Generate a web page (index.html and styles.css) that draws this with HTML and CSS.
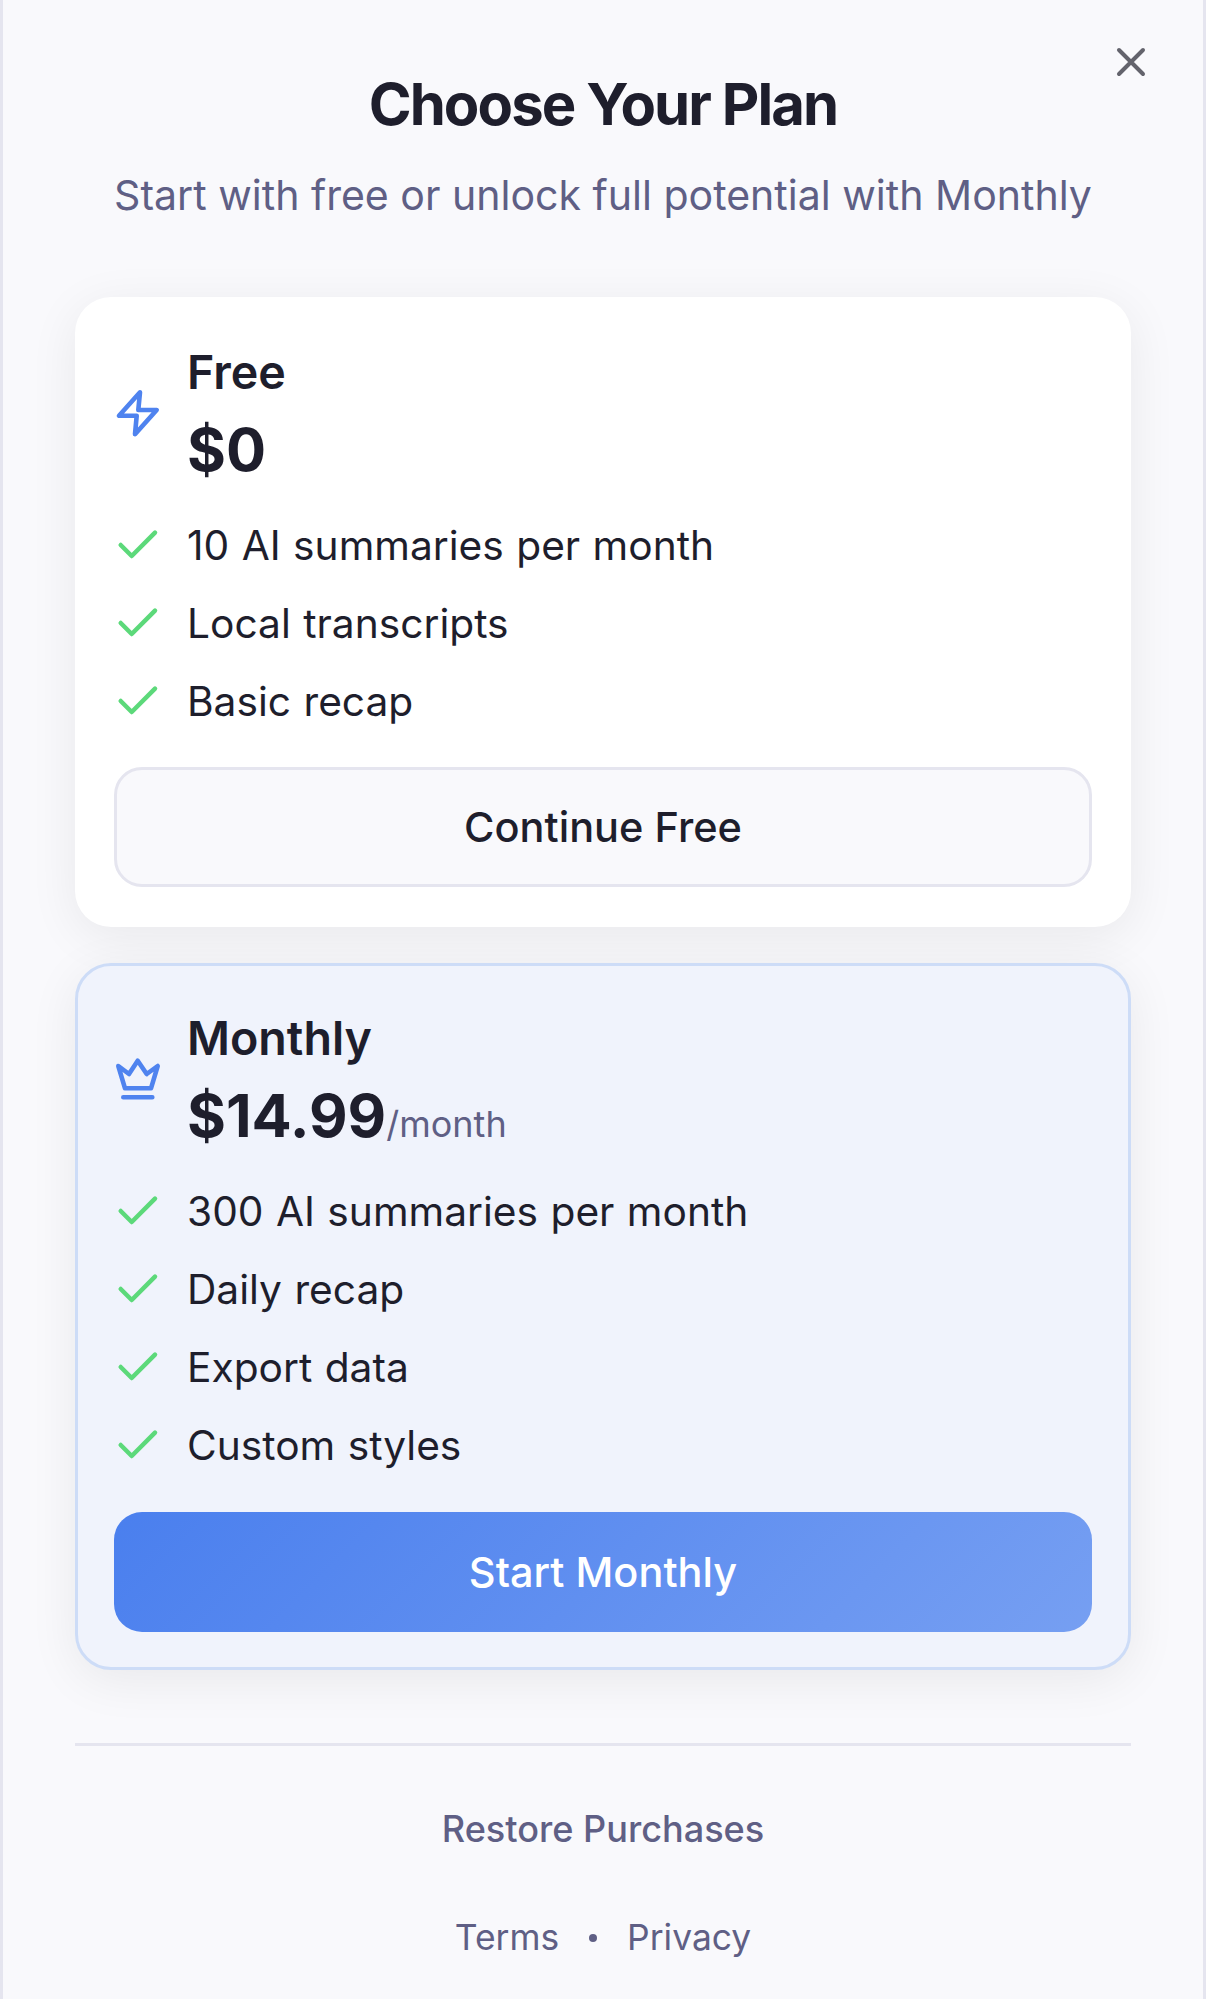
FILE: index.html
```html
<!DOCTYPE html>
<html lang="en">
<head>
<meta charset="utf-8">
<title>Choose Your Plan</title>
<link rel="stylesheet" href="styles.css">
</head>
<body>
<main class="sheet">
  <button class="close" aria-label="Close">
    <svg width="30" height="30" viewBox="0 0 30 30"><path d="M3 3 27 27M27 3 3 27"/></svg>
  </button>
  <header class="head">
    <h1 class="title">Choose Your Plan</h1>
    <p class="subtitle">Start with free or unlock full potential with Monthly</p>
  </header>
  <section class="plans">
    <article class="card">
      <div class="plan-head">
        <svg class="plan-icon" width="42" height="48" viewBox="-3 1 42 48"><path d="M23 3.3 2 26.7H19.7L18 45.3 39.7 21H21.3Z"/></svg>
        <div>
          <div class="plan-name">Free</div>
          <div class="plan-price">$0</div>
        </div>
      </div>
      <ul class="features">
        <li class="feature"><svg class="check" width="42" height="38" viewBox="-3 2 42 38"><path d="M3.7 20 14.7 31 38 7.7"/></svg>10 AI summaries per month</li>
        <li class="feature"><svg class="check" width="42" height="38" viewBox="-3 2 42 38"><path d="M3.7 20 14.7 31 38 7.7"/></svg>Local transcripts</li>
        <li class="feature"><svg class="check" width="42" height="38" viewBox="-3 2 42 38"><path d="M3.7 20 14.7 31 38 7.7"/></svg>Basic recap</li>
      </ul>
      <button class="btn btn-free">Continue Free</button>
    </article>
    <article class="card card-monthly">
      <div class="plan-head">
        <svg class="plan-icon" width="42" height="48" viewBox="-3 0 42 48"><path d="M1.3 10 12 18 20.7 4.7 29.7 18 40.7 10 34 32.3H8ZM6.3 41.3H35.3"/></svg>
        <div>
          <div class="plan-name">Monthly</div>
          <div class="plan-price">$14.99<span class="per">/month</span></div>
        </div>
      </div>
      <ul class="features">
        <li class="feature"><svg class="check" width="42" height="38" viewBox="-3 2 42 38"><path d="M3.7 20 14.7 31 38 7.7"/></svg>300 AI summaries per month</li>
        <li class="feature"><svg class="check" width="42" height="38" viewBox="-3 2 42 38"><path d="M3.7 20 14.7 31 38 7.7"/></svg>Daily recap</li>
        <li class="feature"><svg class="check" width="42" height="38" viewBox="-3 2 42 38"><path d="M3.7 20 14.7 31 38 7.7"/></svg>Export data</li>
        <li class="feature"><svg class="check" width="42" height="38" viewBox="-3 2 42 38"><path d="M3.7 20 14.7 31 38 7.7"/></svg>Custom styles</li>
      </ul>
      <button class="btn btn-monthly">Start Monthly</button>
    </article>
  </section>
  <footer class="foot">
    <a class="restore">Restore Purchases</a>
    <nav class="links"><a>Terms</a><span class="dot"></span><a>Privacy</a></nav>
  </footer>
</main>
</body>
</html>
```
FILE: styles.css
```css
* { box-sizing: border-box; }
html, body { margin: 0; padding: 0; }
body {
  font-family: Inter, "Liberation Sans", sans-serif;
  color: #1e1e2c;
  background: #f9f9fc;
}
.sheet {
  position: relative;
  width: 1206px;
  height: 1999px;
  padding: 70px 72px 0;
  background: #f9f9fc;
  border-left: 3px solid #e5e5ef;
  border-right: 3px solid #e5e5ef;
  overflow: hidden;
}
.close {
  position: absolute;
  top: 47px;
  right: 57px;
  width: 30px;
  height: 30px;
  padding: 0;
  border: 0;
  background: none;
}
.close svg { display: block; }
.close path { fill: none; stroke: #63636c; stroke-width: 4; stroke-linecap: round; }
.head { text-align: center; }
.title {
  margin: 0;
  font-size: 58px;
  line-height: 68px;
  font-weight: 700;
  letter-spacing: -1.9px;
}
.subtitle {
  margin: 32px 0 0;
  font-size: 41.05px;
  line-height: 50px;
  font-weight: 400;
  color: #5f5f85;
}
.plans { display: flex; flex-direction: column; gap: 36px; margin-top: 77px; }
.card {
  padding: 40px 39px;
  background: #fff;
  border-radius: 36px;
  box-shadow: 0 10px 50px rgba(0, 0, 0, 0.07);
}
.card-monthly {
  padding: 37px 36px 35px;
  background: #f0f3fc;
  border: 3px solid #cddcf7;
}
.plan-head { display: flex; align-items: center; gap: 31px; }
.plan-icon { flex: none; overflow: visible; }
.plan-icon path { fill: none; stroke: #4f83ef; stroke-width: 4.6; stroke-linecap: round; stroke-linejoin: round; }
.plan-name { font-size: 46.6px; line-height: 70px; font-weight: 600; }
.plan-price { font-size: 59.5px; line-height: 84px; font-weight: 700; }
.per { font-size: 36px; line-height: 1; font-weight: 400; color: #5f5f85; }
.features { list-style: none; margin: 30px 0 0; padding: 0; display: flex; flex-direction: column; gap: 28px; }
.feature { display: flex; align-items: center; gap: 31px; font-size: 40.7px; line-height: 50px; word-spacing: 1px; }
.check { flex: none; overflow: visible; }
.check path { fill: none; stroke: #5cd97a; stroke-width: 4.5; stroke-linecap: round; stroke-linejoin: round; }
.btn {
  display: block;
  width: 100%;
  height: 120px;
  margin-top: 40px;
  border-radius: 28px;
  font-family: inherit;
  font-size: 41.5px;
  font-weight: 500;
}
.btn-free { background: #f9f9fc; border: 3px solid #e5e5ef; color: #1e1e2c; }
.btn-monthly { margin-top: 41px; border: 0; color: #fff; background: linear-gradient(135deg, #4a7fee, #769ff2); }
.foot { margin-top: 73px; border-top: 3px solid #e5e5ef; text-align: center; color: #5f5f85; font-size: 36px; }
.restore { display: block; margin-top: 61px; line-height: 44px; font-weight: 500; font-size: 36.1px; }
.links { display: flex; justify-content: center; align-items: center; gap: 30px; margin-top: 65px; line-height: 44px; font-size: 35.4px; }
.dot { width: 8px; height: 8px; border-radius: 50%; background: #5f5f85; }
```
